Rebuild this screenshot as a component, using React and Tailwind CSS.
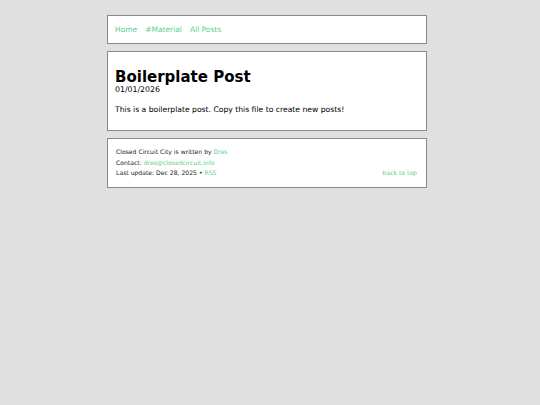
import React from "react";

const link = "text-[#5dcf8e] no-underline";

export default function App() {
  return (
    <div
      className="min-h-[405px] bg-[#e0e0e0] pt-[15px]"
      style={{ fontFamily: '"DejaVu Sans", Verdana, sans-serif' }}
    >
      <div className="ml-[107px] flex w-[320px] flex-col gap-[7px]">
        <nav className="flex h-[29px] items-center gap-[8px] border border-[#8a8a8a] bg-white px-[7px] text-[7.5px]">
          <a href="#" className={link}>Home</a>
          <a href="#" className={link}>#Material</a>
          <a href="#" className={link}>All Posts</a>
        </nav>

        <main className="h-[80px] border border-[#8a8a8a] bg-white px-[7px] pt-[18px] text-black">
          <h1 className="text-[15px] font-bold leading-[15px]">Boilerplate Post</h1>
          <p className="text-[7.8px] leading-[10px]">01/01/2026</p>
          <p className="mt-[10px] text-[7.65px] leading-[10px]">
            This is a boilerplate post. Copy this file to create new posts!
          </p>
        </main>

        <footer className="h-[50px] border border-[#8a8a8a] bg-white pl-[8px] pr-[9px] pt-[8px] text-[6.1px] leading-[10.5px] text-[#222]">
          <p>
            Closed Circuit City is written by <a href="#" className={link}>Dres</a>
          </p>
          <p>
            Contact: <a href="#" className={link}>dres@closedcircuit.info</a>
          </p>
          <div className="flex justify-between">
            <p>
              Last update: Dec 28, 2025 • <a href="#" className={link}>RSS</a>
            </p>
            <a href="#" className={link}>back to top</a>
          </div>
        </footer>
      </div>
    </div>
  );
}
